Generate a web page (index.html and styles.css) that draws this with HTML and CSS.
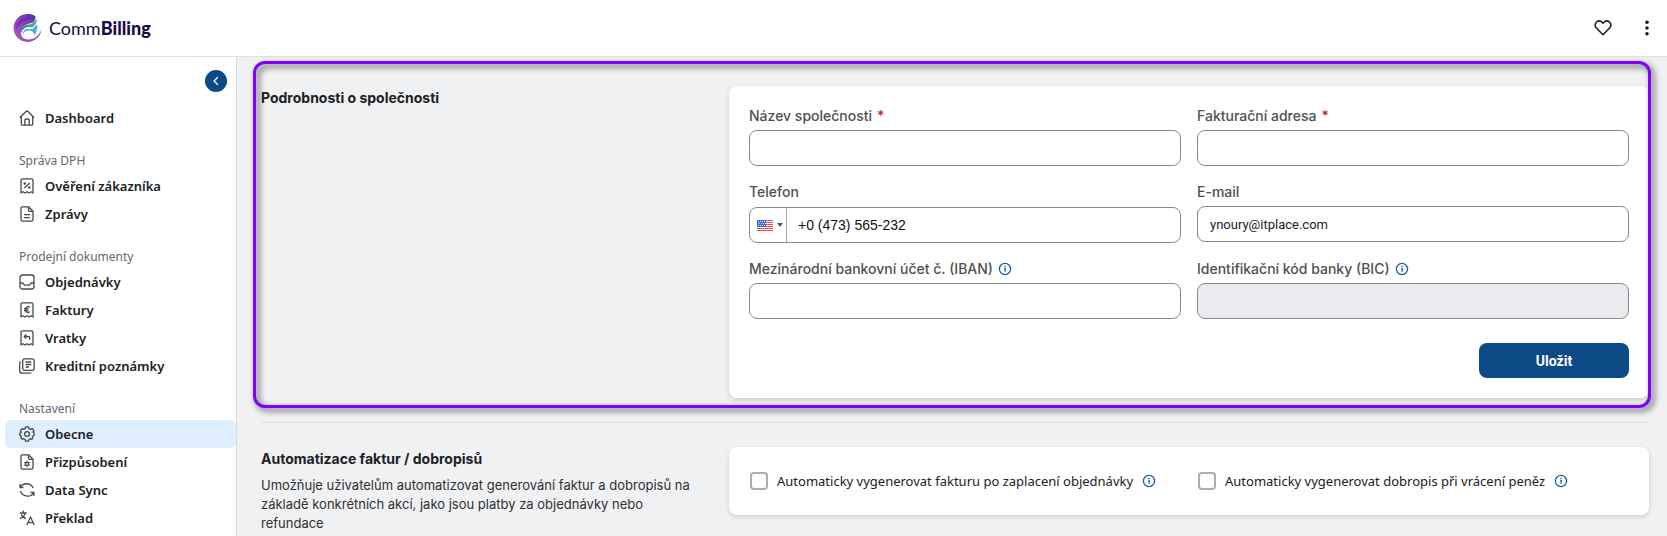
FILE: index.html
```html
<!DOCTYPE html>
<html lang="cs">
<head>
<meta charset="utf-8">
<meta name="viewport" content="width=device-width, initial-scale=1">
<title>CommBilling</title>
<link rel="stylesheet" href="styles.css">
</head>
<body>
<svg class="defs" width="0" height="0" aria-hidden="true">
  <symbol id="info" viewBox="0 0 14 14">
    <circle cx="7" cy="7" r="5.6" fill="none" stroke="currentColor" stroke-width="1.3"/>
    <circle cx="7" cy="4.6" r=".8" fill="currentColor"/>
    <path d="M6.2 6.7H7.2V9.8" fill="none" stroke="currentColor" stroke-width="1.3"/>
  </symbol>
</svg>
<header class="topbar">
  <a class="brand" href="#">
    <svg class="brand-mark" viewBox="0 0 30 30" aria-hidden="true">
      <defs>
        <linearGradient id="disc" x1="0" y1="1" x2="1" y2="0"><stop offset="0" stop-color="#b45cc4"/><stop offset=".5" stop-color="#8d45b8"/><stop offset="1" stop-color="#4a1fa8"/></linearGradient>
        <linearGradient id="wave" x1="0" y1="1" x2="1" y2="0"><stop offset="0" stop-color="#2f6f86"/><stop offset="1" stop-color="#6cc48f"/></linearGradient>
      </defs>
      <path d="M23.500 3.400A14 14 0 1 0 29.500 16C28 22 22 27.200 15.500 26.500C11.500 26 9 23.500 9 20C9 13 15 11 19 10C22 9 23.500 7 23.500 3.400Z" fill="url(#disc)"/>
      <path d="M4 17C4 8 10 4 20 4C13 7 7 10 4 17Z" fill="#5a1fc0" opacity=".6"/>
      <path d="M9 20C8.500 13 14 11.500 17 11.500C20.500 11.500 22 6.500 25 6C24.500 11 22.500 14.500 19 14.500C14 14 10.500 16 9 20Z" fill="url(#wave)"/>
      <path d="M10.500 22.500C10.500 16.500 15 15 18.500 16C21.500 16 23 12.500 25.500 11.500C25.500 16.500 24 20 22.500 22.500C22 18.500 19 17 16 17.500C13 18 11.500 19.500 10.500 22.500Z" fill="#55a9de"/>
      <path d="M9.600 21.500C10 15.500 14.500 14 18.500 15.200C21.500 15.500 23.500 12 25.500 10.200" fill="none" stroke="#fff" stroke-width=".9"/>
    </svg>
    <span class="brand-name">Comm<b>Billing</b></span>
  </a>
  <div class="top-actions">
    <button class="icon-button" type="button" aria-label="Oblíbené">
      <svg width="18" height="18" viewBox="0 0 18 18"><path d="M9 15.800L2.400 9C.6 7.100.8 4.200 2.700 2.900C4.700 1.500 7.300 2 9 4.200C10.700 2 13.300 1.500 15.300 2.900C17.200 4.200 17.400 7.100 15.600 9Z" fill="none" stroke="currentColor" stroke-width="1.600" stroke-linejoin="round"/></svg>
    </button>
    <button class="icon-button" type="button" aria-label="Další možnosti">
      <svg width="18" height="18" viewBox="0 0 18 18" fill="currentColor"><circle cx="9" cy="3.200" r="1.800"/><circle cx="9" cy="9" r="1.800"/><circle cx="9" cy="14.800" r="1.800"/></svg>
    </button>
  </div>
</header>
<div class="layout">
  <nav class="sidebar">
    <button class="collapse" type="button" aria-label="Sbalit nabídku">
      <svg width="10" height="10" viewBox="0 0 10 10"><path d="M6.800 1.200L3 5L6.800 8.800" fill="none" stroke="currentColor" stroke-width="1.300"/></svg>
    </button>
    <div class="nav-group">
      <a class="nav-item" href="#"><svg class="ico" viewBox="0 0 16 16"><path d="M.8 7.800L6.900 1.500Q8 .5 9.100 1.500L15.200 7.800M2.300 6.700V14Q2.300 15.200 3.500 15.200H12.500Q13.700 15.200 13.700 14V6.700M5.800 15V10.500Q5.800 9 7.300 9H8.700Q10.200 9 10.200 10.500V15"/></svg>Dashboard</a>
    </div>
    <div class="nav-group">
      <h2 class="nav-title">Správa DPH</h2>
      <a class="nav-item" href="#"><svg class="ico" viewBox="0 0 16 16"><path d="M2 15V2.500Q2 .8 3.700.8H12.300Q14 .8 14 2.500V15L12 13.700L10 15L8 13.700L6 15L4 13.700ZM5.300 10L10.700 5"/><circle cx="5.800" cy="5.500" r=".6"/><circle cx="10.300" cy="9.600" r=".6"/></svg>Ověření zákazníka</a>
      <a class="nav-item" href="#"><svg class="ico" viewBox="0 0 16 16"><path d="M9.500.8H3.700Q2 .8 2 2.500V13.500Q2 15.200 3.700 15.200H12.300Q14 15.200 14 13.500V5.300ZM9.500.8V4Q9.500 5.300 10.800 5.300H14M5 8.700H11M5 11.600H11"/></svg>Zprávy</a>
    </div>
    <div class="nav-group">
      <h2 class="nav-title">Prodejní dokumenty</h2>
      <a class="nav-item" href="#"><svg class="ico" viewBox="0 0 16 16"><rect x="1" y="1" width="14" height="14" rx="2.500"/><path d="M1 9H3.700L5.500 11.200H10.500L12.300 9H15"/></svg>Objednávky</a>
      <a class="nav-item" href="#"><svg class="ico" viewBox="0 0 16 16"><path d="M2 15V2.500Q2 .8 3.700.8H12.300Q14 .8 14 2.500V15L12 13.700L10 15L8 13.700L6 15L4 13.700ZM10.700 5.200C8.800 3.700 6.600 4.800 6.600 7.500S8.800 11.300 10.700 9.800M5 6.600H9.500M5 8.500H9.500"/></svg>Faktury</a>
      <a class="nav-item" href="#"><svg class="ico" viewBox="0 0 16 16"><path d="M2 15V2.500Q2 .8 3.700.8H12.300Q14 .8 14 2.500V15L12 13.700L10 15L8 13.700L6 15L4 13.700ZM7.300 4.500L5.200 6.500L7.300 8.500M5.500 6.500H9Q10.700 6.500 10.700 8.200V10"/></svg>Vratky</a>
      <a class="nav-item" href="#"><svg class="ico" viewBox="0 0 16 16"><rect x="3.700" y=".8" width="11.500" height="11.500" rx="2"/><path d="M1.800 3.500Q.7 4 .7 5.500V12.500Q.7 15.200 3.500 15.200H10Q11.700 15.200 12.200 14.200M6.600 4H12.300M6.600 6.500H12.300M6.600 9H10"/></svg>Kreditní poznámky</a>
    </div>
    <div class="nav-group">
      <h2 class="nav-title">Nastavení</h2>
      <a class="nav-item active" href="#" aria-current="page"><svg class="ico" viewBox="0 0 16 16"><path d="M6.600.8H9.400L9.900 2.700L11.600 3.400L13.200 2.500L15 4.600L13.900 6.200L15.200 7V9.200L13.700 10L13.900 11.600L12.700 13.300L11.300 12.700L9.900 13.500L9.400 15.200H6.600L6.100 13.500L4.700 12.700L3.300 13.300L1.800 11.600L2.300 10L.8 9.200V7L2.300 6.200L1.500 4.400L3 2.700L4.600 3.400L6.100 2.700Z"/><circle cx="8" cy="8" r="2.400"/></svg>Obecne</a>
      <a class="nav-item" href="#"><svg class="ico" viewBox="0 0 16 16"><path d="M9.500.8H3.700Q2 .8 2 2.500V13.500Q2 15.200 3.700 15.200H12.300Q14 15.200 14 13.500V5.300ZM9.500.8V4Q9.500 5.300 10.800 5.300H14M8 6.700V8.400M8 11.400V13.100M5.200 8.300L6.700 9.100M9.300 10.700L10.800 11.500M10.800 8.300L9.300 9.100M6.700 10.700L5.200 11.500"/><circle cx="8" cy="9.900" r="1.500"/></svg>Přizpůsobení</a>
      <a class="nav-item" href="#"><svg class="ico" viewBox="0 0 16 16"><path d="M1 2V5.500H4.500M1.400 5.300C4 .6 11.500.3 14.300 6M15 14V10.500H11.500M14.600 10.700C12 15.400 4.500 15.700 1.300 9"/></svg>Data Sync</a>
      <a class="nav-item" href="#"><svg class="ico" viewBox="0 0 16 16"><path d="M.8 3H7.700M4.200.6V3M6.200 3C5.800 6 3.500 7.800.8 8.500M2.300 4.500C3 6.800 5 8 6.800 8.500M7.800 15L11.500 7L15.200 15M9 12.600H14"/></svg>Překlad</a>
    </div>
  </nav>
  <main class="content">
    <section class="section highlighted">
      <div class="intro"><h2 class="section-title">Podrobnosti o společnosti</h2></div>
      <form class="card company">
        <div class="field">
          <label class="label" for="name">Název společnosti <span class="required">*</span></label>
          <input class="input" id="name" type="text">
        </div>
        <div class="field">
          <label class="label" for="address">Fakturační adresa <span class="required">*</span></label>
          <input class="input" id="address" type="text">
        </div>
        <div class="field phone-field">
          <label class="label" for="phone">Telefon</label>
          <div class="input phone">
            <button class="country" type="button" aria-label="Země: Spojené státy">
              <svg width="16" height="11" viewBox="0 0 16 11"><path fill="#fff" d="M0 0H16V11H0Z"/><path d="M0 .5H16M0 2.500H16M0 4.500H16M0 6.500H16M0 8.500H16M0 10.500H16" stroke="#f0464e"/><path fill="#3d6fe0" d="M0 0H9V7H0Z"/><path d="M1 1.500H9M2 3.500H9M1 5.500H9" stroke="#dfe8ff" stroke-dasharray="1 1"/></svg>
              <svg width="6" height="4" viewBox="0 0 6 4"><path d="M0 0H6L3 4Z" fill="#555"/></svg>
            </button>
            <input class="phone-input" id="phone" type="tel" value="+0 (473) 565-232">
          </div>
        </div>
        <div class="field">
          <label class="label" for="email">E-mail</label>
          <input class="input" id="email" type="email" value="ynoury@itplace.com">
        </div>
        <div class="field">
          <label class="label" for="iban">Mezinárodní bankovní účet č. (IBAN) <svg class="info"><use href="#info"/></svg></label>
          <input class="input" id="iban" type="text">
        </div>
        <div class="field">
          <label class="label" for="bic">Identifikační kód banky (BIC) <svg class="info"><use href="#info"/></svg></label>
          <input class="input" id="bic" type="text" disabled>
        </div>
        <button class="save" type="submit">Uložit</button>
      </form>
    </section>
    <hr class="divider">
    <section class="section">
      <div class="intro">
        <h2 class="section-title">Automatizace faktur / dobropisů</h2>
        <p class="section-text">Umožňuje uživatelům automatizovat generování faktur a dobropisů na základě konkrétních akcí, jako jsou platby za objednávky nebo refundace</p>
      </div>
      <div class="card options">
        <label class="option"><input class="check" type="checkbox">Automaticky vygenerovat fakturu po zaplacení objednávky<svg class="info"><use href="#info"/></svg></label>
        <label class="option"><input class="check" type="checkbox">Automaticky vygenerovat dobropis při vrácení peněz<svg class="info"><use href="#info"/></svg></label>
      </div>
    </section>
  </main>
</div>
</body>
</html>
```
FILE: styles.css
```css
* { box-sizing: border-box; }
body {
  margin: 0;
  min-height: 100vh;
  display: flex;
  flex-direction: column;
  background: #f0f1f3;
  color: #202124;
  font-family: Inter, "Liberation Sans", sans-serif;
  font-size: 14px;
}
.defs { position: absolute; }
button { font: inherit; color: inherit; border: 0; padding: 0; background: none; cursor: pointer; }
a { color: inherit; text-decoration: none; }
h2, p { margin: 0; }

.topbar {
  display: flex;
  align-items: center;
  justify-content: space-between;
  height: 57px;
  padding: 0 8px 0 12px;
  background: #fff;
  border-bottom: 1px solid #dedfe2;
}
.brand { display: flex; align-items: center; gap: 7px; color: #1b0a4a; }
.brand-mark { width: 30px; height: 30px; }
.brand-name { font-family: Lato, "Liberation Sans", sans-serif; font-size: 18px; line-height: 24px; }
.brand-name b { font-weight: 900; }
.top-actions { display: flex; gap: 20px; }
.icon-button { display: grid; place-items: center; width: 24px; height: 24px; }

.layout { flex: 1; display: flex; align-items: stretch; }
.sidebar {
  flex: 0 0 237px;
  display: flex;
  flex-direction: column;
  gap: 18px;
  padding: 13px 0 4px 5px;
  background: #fff;
  border-right: 1px solid #d9dbdf;
  font-family: "Noto Sans", "Open Sans", sans-serif;
}
.collapse {
  align-self: flex-end;
  display: grid;
  place-items: center;
  width: 22px;
  height: 22px;
  margin: 0 9px -6px 0;
  border-radius: 50%;
  background: #0b4a85;
  color: #fff;
}
.nav-group { display: flex; flex-direction: column; }
.nav-title { padding-left: 14px; font-size: 12px; line-height: 22px; font-weight: 400; color: #5f6773; }
.nav-item {
  display: flex;
  align-items: center;
  gap: 10px;
  height: 28px;
  padding-left: 14px;
  border-radius: 5px;
  font-size: 13px;
  line-height: 20px;
  font-weight: 600;
}
.nav-item.active { background: #dfefff; }
.ico { width: 16px; height: 16px; fill: none; stroke: #4a4a4a; stroke-width: 1.3; stroke-linejoin: round; }

.content { flex: 1; min-width: 0; padding: 29px 18px 20px 24px; }
.section { position: relative; display: grid; grid-template-columns: 1fr 2fr; gap: 8px; align-items: start; }
.highlighted::after {
  content: "";
  position: absolute;
  inset: -25px -2px -10px -8px;
  border: 3px solid #7f00ff;
  border-radius: 12px;
  filter: drop-shadow(3px 3px 3px rgba(0, 0, 0, .7));
  pointer-events: none;
}
.intro { padding-right: 16px; }
.section-title { font-size: 14px; line-height: 24px; font-weight: 700; }
.section-text { margin-top: 5px; font-size: 13px; line-height: 19px; color: #303030; }
.divider { width: 100%; height: 1px; margin: 24px 0; border: 0; background: #dadcdf; }

.card { background: #fff; border-radius: 8px; box-shadow: 0 2px 5px rgba(0, 0, 0, .14); }
.company { display: grid; grid-template-columns: 1fr 1fr; gap: 16px; padding: 20px; }
.field { display: flex; flex-direction: column; gap: 4px; min-width: 0; }
.phone-field { gap: 5px; }
.label { display: flex; align-items: center; gap: 5px; font-size: 14px; line-height: 20px; font-weight: 500; color: #505050; }
.required { color: #c0281c; }
.info { flex: none; width: 14px; height: 14px; color: #1d5fa5; }
.input {
  width: 100%;
  height: 36px;
  padding: 0 12px;
  border: 1px solid #8a8a8a;
  border-radius: 8px;
  background: #fff;
  color: #202124;
  font-family: Roboto, sans-serif;
  font-size: 13px;
}
.input:disabled { background: #e9ebef; }
.phone { display: flex; padding: 0; overflow: hidden; }
.country { display: flex; align-items: center; justify-content: center; gap: 4px; width: 37px; padding-left: 4px; border-right: 1px solid #a5a5a5; }
.phone-input {
  flex: 1;
  min-width: 0;
  padding: 0 11px;
  border: 0;
  background: none;
  color: #111;
  font-family: "Liberation Sans", Arial, sans-serif;
  font-size: 14px;
}
.save {
  grid-column: 2;
  justify-self: end;
  width: 150px;
  height: 35px;
  margin-top: 8px;
  border-radius: 8px;
  background: #0b4a85;
  color: #fff;
  font-family: Roboto, sans-serif;
  font-weight: 700;
}
.options {
  display: grid;
  grid-template-columns: 1fr 1fr;
  gap: 16px;
  padding: 24px 20px;
  font-family: "Noto Sans", "Open Sans", sans-serif;
}
.option { display: flex; align-items: center; gap: 9px; line-height: 20px; font-size: 13px; }
.check {
  appearance: none;
  width: 18px;
  height: 18px;
  margin: 0 0 0 1px;
  border: 2px solid #a9adb6;
  border-radius: 4px;
  background: #fff;
}
.check:checked { background: #0b4a85; border-color: #0b4a85; }
```
